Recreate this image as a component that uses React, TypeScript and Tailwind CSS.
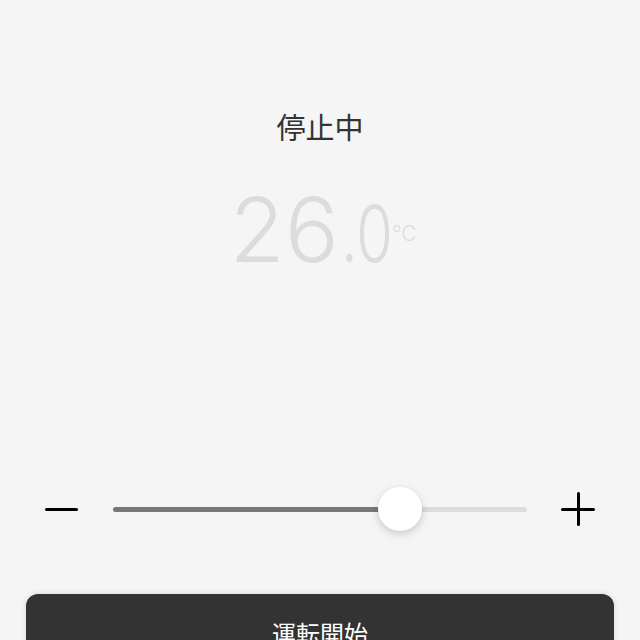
export default function App() {
  const value = 26.0;
  const pct = ((400 - 113) / (527 - 113)) * 100;

  return (
    <div
      className="flex h-[640px] w-[640px] flex-col overflow-hidden bg-[#f5f5f5]"
      style={{ fontFamily: '"Noto Sans CJK JP", "Noto Sans", sans-serif' }}
    >
      <div className="flex flex-col items-center pt-[105px]">
        <p className="text-[29px] leading-[42px] text-[#333]">停止中</p>

        <div className="mt-[38px] flex h-[92px] items-baseline pl-[6px] font-['Inter','Noto_Sans',sans-serif] text-[#dcdcdc]">
          <span className="text-[90px] font-light leading-none">26</span>
          <span className="ml-[2px] mr-[-17px] inline-block origin-left scale-x-[0.76] text-[78px] font-light leading-none">
            .0
          </span>
          <span className="inline-block -translate-y-[21px] text-[21px] font-light leading-none">
            °C
          </span>
        </div>
      </div>

      <div className="mt-[210px] flex items-center px-[45px]">
        <div className="h-[3px] w-[33px] rounded-full bg-black" />
        <div className="relative ml-[35px] mr-[34px] h-[44px] flex-1">
          <div className="absolute left-0 right-0 top-[20px] h-[5px] rounded-full bg-[#dcdcdc]" />
          <div
            className="absolute left-0 top-[20px] h-[5px] rounded-full bg-[#777]"
            style={{ width: `${pct}%` }}
          />
          <div
            className="absolute top-0 h-[44px] w-[44px] -translate-x-1/2 rounded-full bg-white shadow-[0_3px_8px_rgba(0,0,0,0.18)]"
            style={{ left: `${pct}%` }}
            aria-label={`${value}`}
          />
        </div>
        <div className="relative h-[34px] w-[34px]">
          <div className="absolute left-0 top-[15.5px] h-[3px] w-[34px] rounded-full bg-black" />
          <div className="absolute left-[15.5px] top-0 h-[34px] w-[3px] rounded-full bg-black" />
        </div>
      </div>

      <div className="mt-[63px] px-[26px]">
        <button className="flex h-[80px] w-full items-start justify-center rounded-[12px] bg-[#333] pt-[22px] text-[24px] leading-[34px] text-white shadow-[0_0_6px_rgba(0,0,0,0.12)]">
          運転開始
        </button>
      </div>
    </div>
  );
}
